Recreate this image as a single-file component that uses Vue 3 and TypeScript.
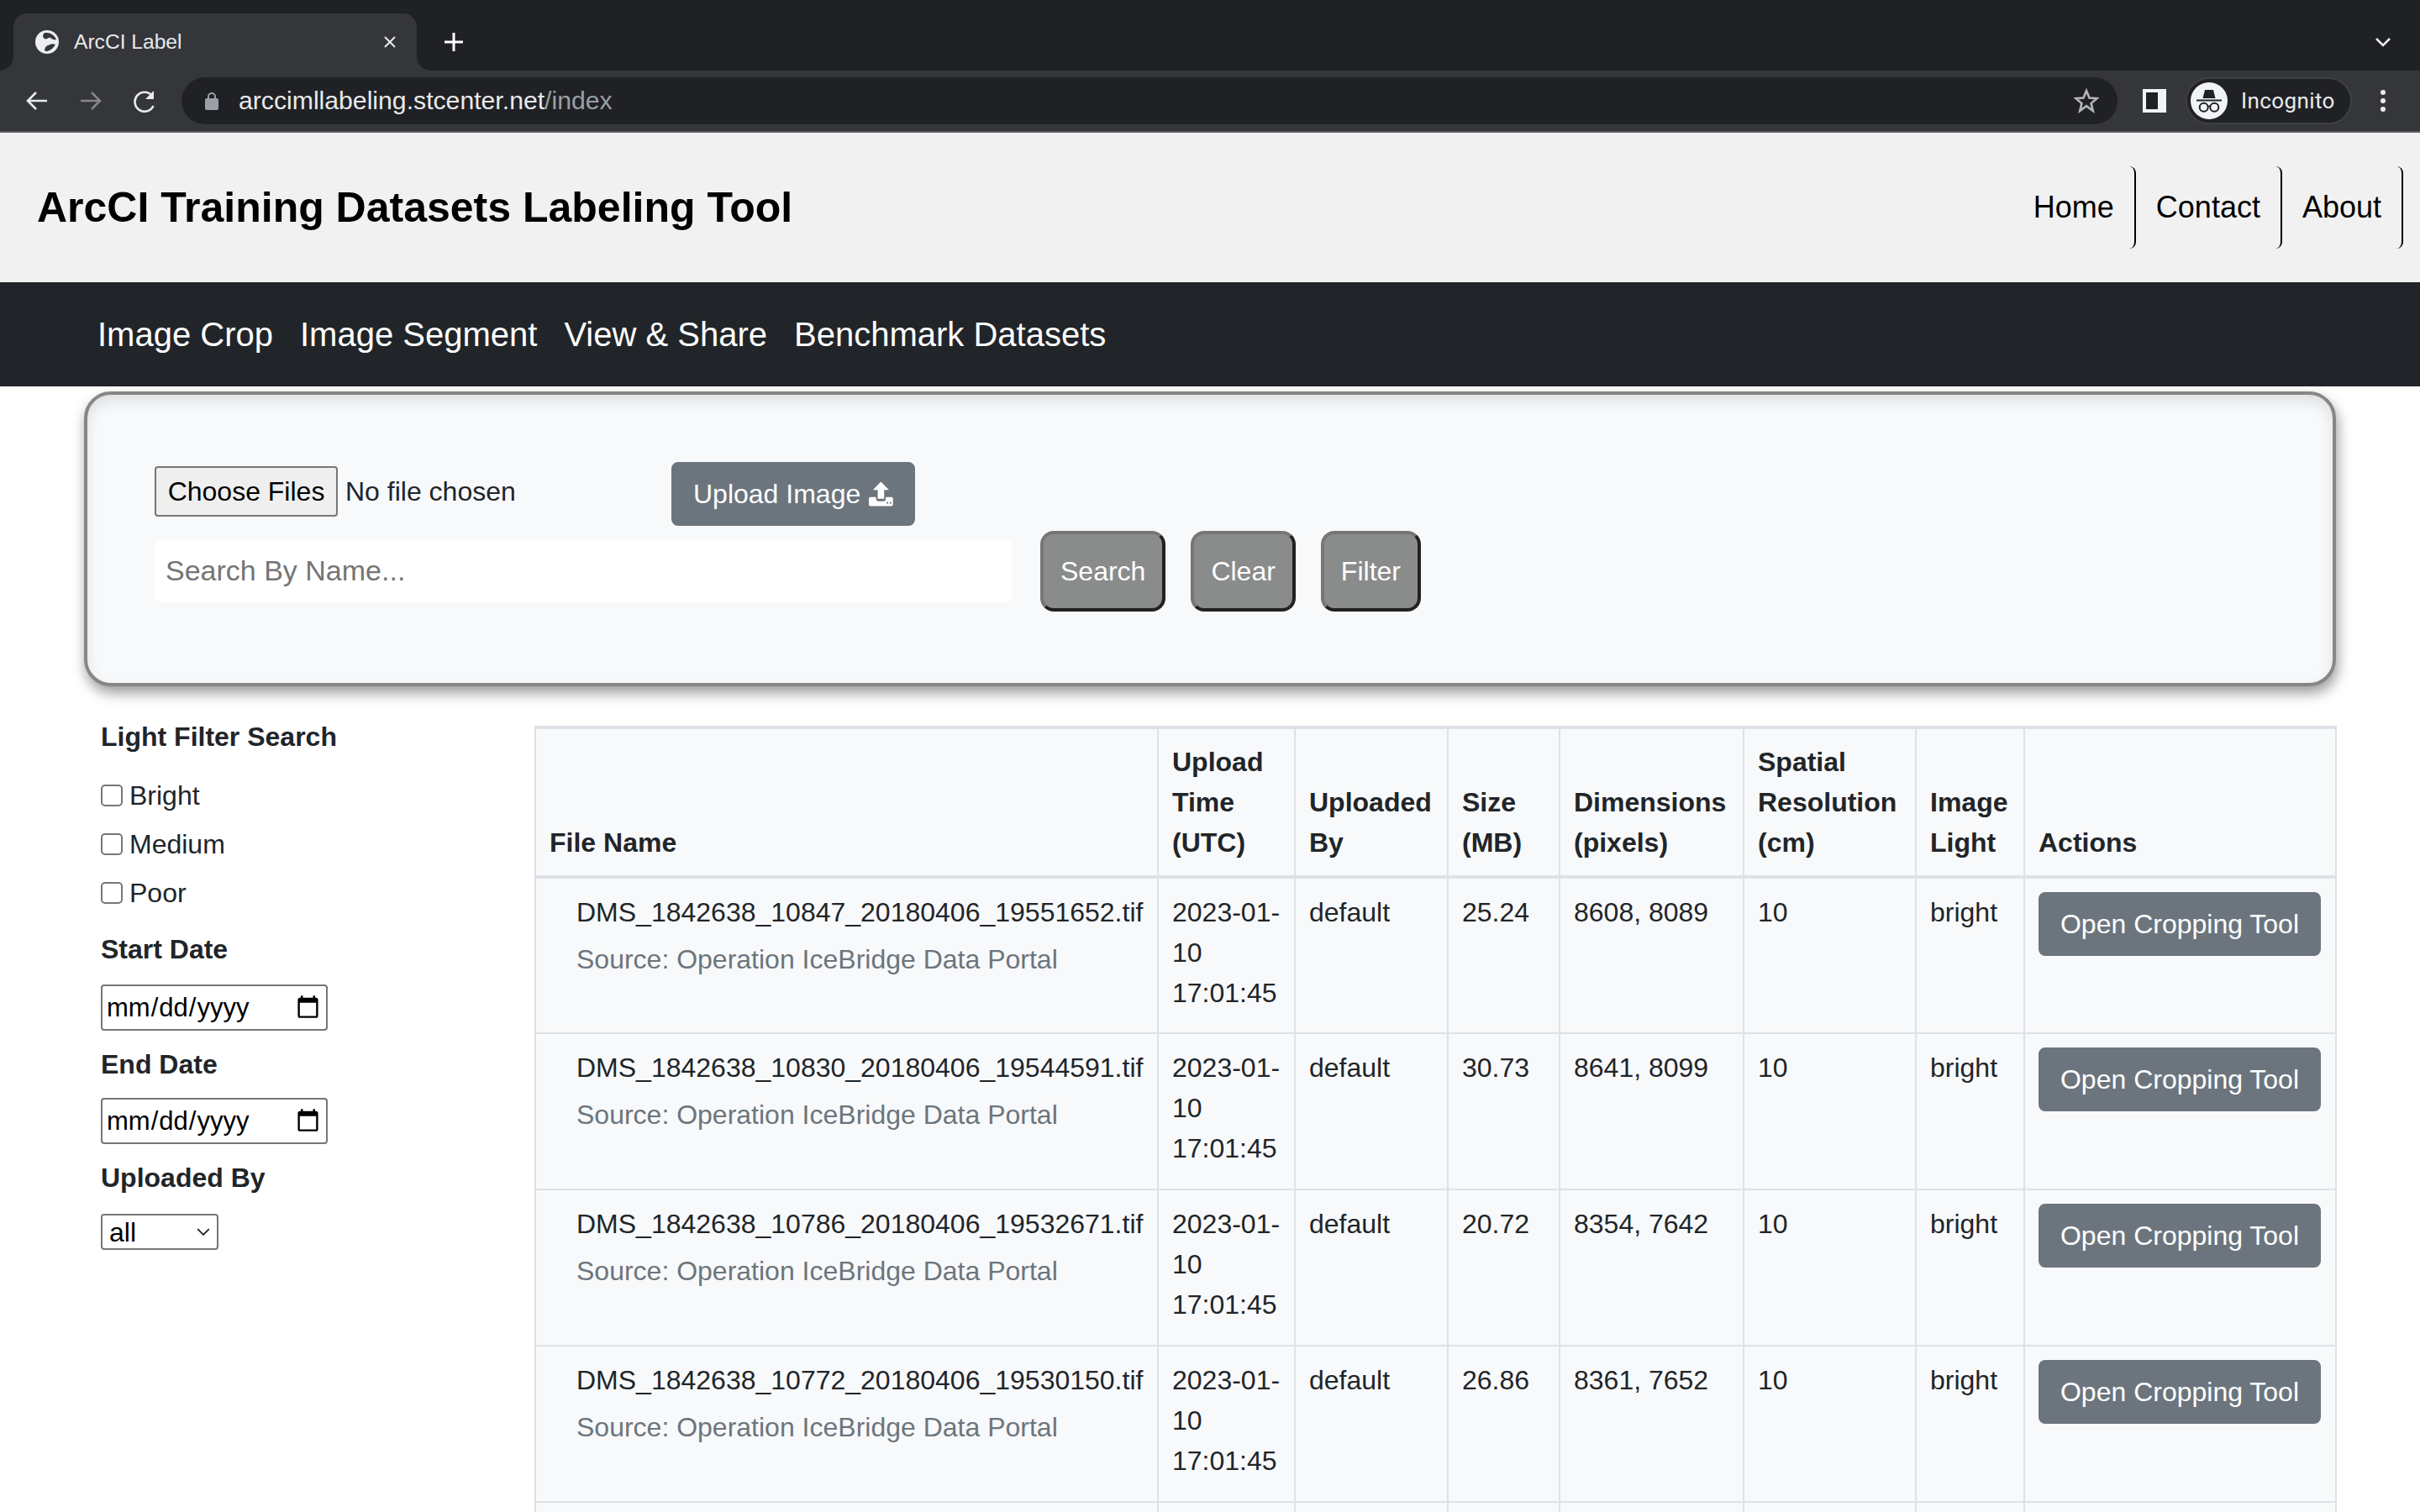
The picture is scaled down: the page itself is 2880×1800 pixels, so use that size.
<script setup lang="ts">
type Row = {
  name: string;
  time: string[];
  by: string;
  size: string;
  dims: string;
  res: string;
  light: string;
};

const rows: Row[] = [
  { name: "DMS_1842638_10847_20180406_19551652.tif", time: ["2023-01-", "10", "17:01:45"], by: "default", size: "25.24", dims: "8608, 8089", res: "10", light: "bright" },
  { name: "DMS_1842638_10830_20180406_19544591.tif", time: ["2023-01-", "10", "17:01:45"], by: "default", size: "30.73", dims: "8641, 8099", res: "10", light: "bright" },
  { name: "DMS_1842638_10786_20180406_19532671.tif", time: ["2023-01-", "10", "17:01:45"], by: "default", size: "20.72", dims: "8354, 7642", res: "10", light: "bright" },
  { name: "DMS_1842638_10772_20180406_19530150.tif", time: ["2023-01-", "10", "17:01:45"], by: "default", size: "26.86", dims: "8361, 7652", res: "10", light: "bright" },
];

const colWidths = [741, 163, 182, 133, 219, 205, 129, 371];
const lights = ["Bright", "Medium", "Poor"];
const topLinks = ["Home", "Contact", "About"];
const navLinks = ["Image Crop", "Image Segment", "View & Share", "Benchmark Datasets"];
</script>

<template>
  <div class="page">
    <!-- browser window -->
    <div class="tabstrip">
      <div class="tab">
        <svg class="favicon" viewBox="0 0 28 28">
          <circle cx="14" cy="14" r="14" fill="#eceef0" />
          <path d="M11 3C9 5 8 8 11 10c3 2 4-2 7-1 2 1 3 3 7 2-2-5-7-8-11-8z" fill="#35363a" />
          <path d="M12 25c-2-2 0-6 3-7 3-1 4-3 9-1-2 4-6 7-10 8z" fill="#35363a" />
        </svg>
        <span class="tab-title">ArcCI Label</span>
        <svg class="tab-close" viewBox="0 0 16 16">
          <path d="M2 2l12 12M14 2L2 14" stroke="#e8eaed" stroke-width="2" fill="none" />
        </svg>
      </div>
      <svg class="newtab" viewBox="0 0 24 24">
        <path d="M12 1v22M1 12h22" stroke="#fff" stroke-width="3" fill="none" />
      </svg>
      <svg class="tabs-menu" viewBox="0 0 20 14">
        <path d="M2 3l8 8 8-8" stroke="#e8eaed" stroke-width="2.6" fill="none" />
      </svg>
    </div>
    <div class="toolbar">
      <svg class="tool-icon" viewBox="0 0 28 28">
        <path d="M26 14H4M13 4L3 14l10 10" stroke="#e8eaed" stroke-width="2.6" fill="none" />
      </svg>
      <svg class="tool-icon" viewBox="0 0 28 28">
        <path d="M2 14h22M15 4l10 10-10 10" stroke="#85878a" stroke-width="2.6" fill="none" />
      </svg>
      <svg class="tool-icon" viewBox="0 0 28 28">
        <path d="M24.500 20A11.500 11.500 0 1 1 23 8" stroke="#e8eaed" stroke-width="2.6" fill="none" />
        <path d="M25 2v10H15z" fill="#e8eaed" />
      </svg>
      <div class="omnibox">
        <svg class="lock" viewBox="0 0 16 22">
          <path d="M4 9V6a4 4 0 0 1 8 0v3" stroke="#9aa0a6" stroke-width="2" fill="none" />
          <rect x="0" y="8" width="16" height="14" rx="2" fill="#9aa0a6" />
        </svg>
        <span class="url">arccimllabeling.stcenter.net<span class="url-path">/index</span></span>
        <svg class="star" viewBox="0 0 30 30">
          <path d="M15 3l3.500 8.500 9 .7-6.900 5.900 2.200 8.900L15 21.200 7.200 27l2.200-8.900-6.900-5.900 9-.7z" stroke="#b4b6b8" stroke-width="2.600" fill="none" />
        </svg>
      </div>
      <div class="side-panel"><div class="side-panel-hole"></div></div>
      <div class="incognito">
        <svg class="avatar" viewBox="0 0 44 44">
          <circle cx="22" cy="22" r="22" fill="#f1f3f4" />
          <path d="M17 9h10l2.500 10h-15z" fill="#202124" />
          <path d="M7 21.500h30" stroke="#202124" stroke-width="2" />
          <circle cx="15.700" cy="29.700" r="5" stroke="#202124" stroke-width="2" fill="none" />
          <circle cx="28.300" cy="29.700" r="5" stroke="#202124" stroke-width="2" fill="none" />
          <path d="M20 28.500h4" stroke="#202124" stroke-width="1.500" />
        </svg>
        <span class="incognito-label">Incognito</span>
      </div>
      <svg class="dots" viewBox="0 0 8 28">
        <circle cx="4" cy="4" r="3" fill="#e8eaed" />
        <circle cx="4" cy="14" r="3" fill="#e8eaed" />
        <circle cx="4" cy="24" r="3" fill="#e8eaed" />
      </svg>
    </div>

    <!-- site header -->
    <header class="site-header">
      <h1 class="site-title">ArcCI Training Datasets Labeling Tool</h1>
      <div class="top-links">
        <a v-for="link in topLinks" :key="link" class="top-link">{{ link }}</a>
      </div>
    </header>
    <nav class="main-nav">
      <a v-for="link in navLinks" :key="link" class="nav-link">{{ link }}</a>
    </nav>

    <!-- upload / search -->
    <section class="panel">
      <div class="upload-row">
        <input class="file-input" type="file" multiple />
        <button class="btn-secondary upload-btn">
          Upload Image
          <svg class="upload-icon" viewBox="0 0 30 30">
            <path fill="#fff" d="M15 0l10 10h-6v11h-8V10H5z" />
            <path fill="#fff" d="M2 19h7v2q0 3 3 3h6q3 0 3-3v-2h7q2 0 2 2v7q0 2-2 2H2q-2 0-2-2v-7q0-2 2-2z" />
            <rect x="22" y="25" width="2" height="2" fill="#6c757d" />
            <rect x="26" y="25" width="2" height="2" fill="#6c757d" />
          </svg>
        </button>
      </div>
      <div class="search-row">
        <input class="search-input" type="text" placeholder="Search By Name..." />
        <button class="gray-btn search-btn">Search</button>
        <button class="gray-btn">Clear</button>
        <button class="gray-btn">Filter</button>
      </div>
    </section>

    <div class="content">
      <aside class="filters">
        <div class="filter-title first">Light Filter Search</div>
        <label v-for="light in lights" :key="light" class="check-row">
          <input class="check" type="checkbox" />
          <span>{{ light }}</span>
        </label>
        <div class="filter-title start">Start Date</div>
        <input class="date-input" type="date" />
        <div class="filter-title">End Date</div>
        <input class="date-input" type="date" />
        <div class="filter-title">Uploaded By</div>
        <div class="select-wrap">
          <select class="by-select">
            <option>all</option>
          </select>
          <svg class="select-arrow" viewBox="0 0 14 8">
            <path d="M1 1l6 6 6-6" stroke="#222" stroke-width="1.600" fill="none" />
          </svg>
        </div>
      </aside>

      <table class="files">
        <colgroup>
          <col v-for="(w, i) in colWidths" :key="i" :style="{ width: w + 'px' }" />
        </colgroup>
        <thead>
          <tr>
            <th>File Name</th>
            <th>Upload Time (UTC)</th>
            <th>Uploaded By</th>
            <th>Size (MB)</th>
            <th>Dimensions (pixels)</th>
            <th>Spatial Resolution (cm)</th>
            <th>Image Light</th>
            <th>Actions</th>
          </tr>
        </thead>
        <tbody>
          <tr v-for="row in rows" :key="row.name">
            <td class="name-cell">
              <div>{{ row.name }}</div>
              <div class="source">Source: Operation IceBridge Data Portal</div>
            </td>
            <td><div v-for="part in row.time" :key="part">{{ part }}</div></td>
            <td>{{ row.by }}</td>
            <td>{{ row.size }}</td>
            <td>{{ row.dims }}</td>
            <td>{{ row.res }}</td>
            <td>{{ row.light }}</td>
            <td><button class="btn-secondary crop-btn">Open Cropping Tool</button></td>
          </tr>
          <tr class="next-row">
            <td v-for="i in 8" :key="i"></td>
          </tr>
        </tbody>
      </table>
    </div>
  </div>
</template>

<style>
html,
body {
  margin: 0;
  overflow: hidden;
  background: #fff;
}
</style>

<style scoped>
.page {
  width: 2880px;
  height: 1800px;
  overflow: hidden;
  font-family: "Liberation Sans", Arial, sans-serif;
  font-size: 32px;
  line-height: 48px;
  color: #212529;
}

/* browser chrome */
.tabstrip {
  height: 84px;
  background: #202124;
  display: flex;
  align-items: flex-end;
  position: relative;
}
.tab {
  width: 480px;
  height: 68px;
  margin-left: 16px;
  background: #35363a;
  border-radius: 16px 16px 0 0;
  display: flex;
  align-items: center;
  box-sizing: border-box;
  padding: 0 24px 0 26px;
  color: #e8eaed;
  position: relative;
}
/* the little flares where the tab meets the toolbar */
.tab::before,
.tab::after {
  content: "";
  position: absolute;
  bottom: 0;
  width: 16px;
  height: 16px;
}
.tab::before {
  left: -16px;
  background: radial-gradient(circle at 0 0, #202124 15.500px, #35363a 16px);
}
.tab::after {
  right: -16px;
  background: radial-gradient(circle at 100% 0, #202124 15.500px, #35363a 16px);
}
.favicon {
  width: 28px;
  height: 28px;
}
.tab-title {
  font-size: 24.6px;
  line-height: 28px;
  margin-left: 18px;
  flex: 1;
}
.tab-close {
  width: 16px;
  height: 16px;
}
.newtab {
  width: 24px;
  height: 24px;
  margin: 0 0 22px 32px;
}
.tabs-menu {
  width: 20px;
  height: 14px;
  margin: 0 34px 27px auto;
}
.toolbar {
  height: 72px;
  background: #35363a;
  border-bottom: 2px solid #5f6063;
  display: flex;
  align-items: center;
  padding-left: 30px;
}
.tool-icon {
  width: 28px;
  height: 28px;
  margin-right: 36px;
}
.omnibox {
  width: 2304px;
  height: 56px;
  margin-left: -6px;
  border-radius: 28px;
  background: #202124;
  display: flex;
  align-items: center;
  padding: 0 22px 0 28px;
  box-sizing: border-box;
}
.lock {
  width: 16px;
  height: 22px;
}
.url {
  margin-left: 24px;
  font-size: 30.200px;
  line-height: 36px;
  color: #e8eaed;
  flex: 1;
}
.url-path {
  color: #9aa0a6;
}
.star {
  width: 30px;
  height: 30px;
}
.side-panel {
  width: 28px;
  height: 28px;
  margin-left: 30px;
  background: #f1f3f4;
  position: relative;
}
.side-panel-hole {
  width: 14px;
  height: 20px;
  margin: 4px 0 0 4px;
  background: #202124;
  position: absolute;
}
.incognito {
  width: 198px;
  height: 56px;
  margin-left: 23px;
  box-sizing: border-box;
  border: 2px solid #3f4044;
  border-radius: 28px;
  background: #202124;
  display: flex;
  align-items: center;
  padding-left: 4px;
}
.avatar {
  width: 44px;
  height: 44px;
}
.incognito-label {
  margin-left: 16px;
  font-family: Roboto, "Liberation Sans", sans-serif;
  font-size: 26px;
  line-height: 32px;
  letter-spacing: 0.4px;
  color: #e8eaed;
}
.dots {
  width: 8px;
  height: 28px;
  margin-left: 33px;
}

/* site header */
.site-header {
  height: 178px;
  background: #f1f1f1;
  display: flex;
  align-items: center;
  justify-content: space-between;
  padding: 0 20px 0 44px;
}
.site-title {
  margin: 0;
  font-size: 50px;
  line-height: 64px;
  font-weight: 700;
  color: #000;
}
.top-links {
  display: flex;
}
.top-link {
  height: 98px;
  line-height: 98px;
  padding: 0 24px;
  font-size: 36px;
  color: #000;
  border-right: 2px solid #000;
  border-radius: 8px;
}
.main-nav {
  height: 124px;
  background: #212529;
  display: flex;
  align-items: center;
  padding-left: 100px;
}
.nav-link {
  padding: 0 16px;
  font-size: 40px;
  line-height: 60px;
  color: #fff;
}

/* upload + search panel */
.panel {
  width: 2680px;
  height: 351px;
  margin: 6px 0 0 100px;
  box-sizing: border-box;
  border: 4px solid #868686;
  border-radius: 32px;
  background: #f8f9fa;
  box-shadow: 2px 8px 16px rgba(0, 0, 0, 0.4), inset 0 8px 16px rgba(0, 0, 0, 0.1);
  padding: 80px 0 0 80px;
}
.upload-row {
  display: flex;
  align-items: center;
}
.file-input {
  width: 615px;
  margin-bottom: 6px;
  font-family: "Liberation Sans", Arial, sans-serif;
  font-size: 32px;
  color: #212529;
}
.file-input::file-selector-button {
  height: 60px;
  width: 218px;
  margin-right: 9px;
  font-family: "Liberation Sans", Arial, sans-serif;
  font-size: 32px;
  color: #000;
  background: #efefef;
  border: 2px solid #767676;
  border-radius: 4px;
  padding: 0;
}
.btn-secondary {
  box-sizing: border-box;
  height: 76px;
  border: 2px solid #6c757d;
  border-radius: 8px;
  background: #6c757d;
  color: #fff;
  font-family: "Liberation Sans", Arial, sans-serif;
  font-size: 32px;
  padding: 0 24px;
}
.upload-btn {
  width: 290px;
  display: flex;
  align-items: center;
  white-space: nowrap;
}
.upload-icon {
  width: 30px;
  height: 30px;
  margin-left: 10px;
}
.search-row {
  display: flex;
  align-items: flex-start;
  margin-top: 6px;
}
.search-input {
  box-sizing: border-box;
  width: 1021px;
  height: 75px;
  margin-top: 10px;
  border: none;
  border-radius: 8px;
  background: #fff;
  padding: 0 13px;
  font-family: "Liberation Sans", Arial, sans-serif;
  font-size: 34px;
  outline: none;
}
.search-input::placeholder {
  color: #757575;
}
.gray-btn {
  box-sizing: border-box;
  height: 96px;
  margin-left: 30px;
  padding: 0 20px;
  border-width: 4px;
  border-style: solid;
  border-color: #767676 #212121 #212121 #767676;
  border-radius: 16px;
  background: #8a8c8b;
  color: #fff;
  font-family: "Liberation Sans", Arial, sans-serif;
  font-size: 32px;
}
.search-btn {
  margin-left: 33px;
}

/* filters + table */
.content {
  display: flex;
  align-items: flex-start;
  margin-top: 47px;
}
.filters {
  width: 516px;
  margin-left: 120px;
  flex-shrink: 0;
  display: flex;
  flex-direction: column;
  align-items: flex-start;
}
.filter-title {
  font-weight: 700;
  margin: 20px 0 20px;
  line-height: 40px;
}
.filter-title.first {
  margin: -7px 0 21px;
}
.filter-title.start {
  margin: 18px 0 22px;
}
.check-row {
  display: flex;
  align-items: center;
  height: 58px;
  color: #212529;
}
.check {
  appearance: none;
  box-sizing: border-box;
  width: 26px;
  height: 26px;
  margin: 0 8px 0 0;
  border: 2px solid #767676;
  border-radius: 5px;
  background: #fff;
}
.date-input {
  box-sizing: border-box;
  width: 270px;
  height: 55px;
  margin: 0;
  padding: 0 4px;
  border: 2px solid #767676;
  border-radius: 4px;
  background: #fff;
  color: #000;
  font-family: "Liberation Sans", Arial, sans-serif;
  font-size: 31px;
}
.select-wrap {
  position: relative;
  width: 140px;
  height: 43px;
  margin-top: 3px;
}
.by-select {
  appearance: none;
  box-sizing: border-box;
  display: block;
  width: 140px;
  height: 43px;
  padding: 0 0 0 8px;
  border: 2px solid #767676;
  border-radius: 4px;
  background: #fff;
  color: #000;
  font-family: "Liberation Sans", Arial, sans-serif;
  font-size: 32px;
}
.select-arrow {
  position: absolute;
  right: 10px;
  top: 17px;
  width: 16px;
  height: 9px;
  pointer-events: none;
}
.files {
  width: 2143px;
  table-layout: fixed;
  border-collapse: collapse;
  background: #f8f9fa;
  flex-shrink: 0;
}
.files th,
.files td {
  border: 2px solid #dee2e6;
  padding: 16px;
  vertical-align: top;
  text-align: left;
}
.files th {
  vertical-align: bottom;
  font-weight: 700;
  padding-top: 15px;
  padding-bottom: 15px;
  border-bottom-width: 4px;
  border-top-width: 4px;
}
.files tbody tr {
  height: 186px;
}
.files .name-cell {
  padding-left: 48px;
  padding-right: 8px;
  white-space: nowrap;
}
.source {
  margin-top: 8px;
  color: #6c757d;
}
.crop-btn {
  width: 336px;
  padding: 0;
  white-space: nowrap;
}
</style>
